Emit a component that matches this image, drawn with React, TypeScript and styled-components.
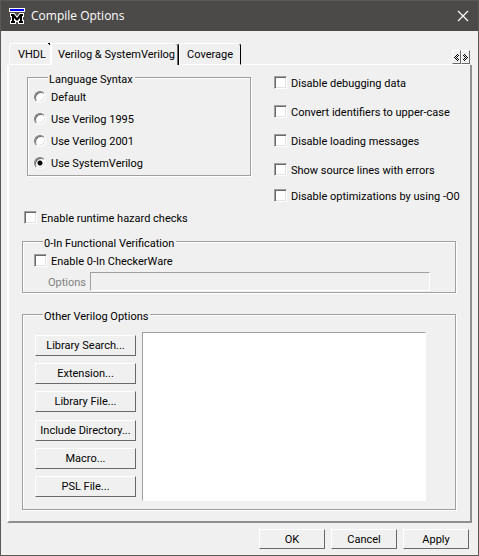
import React, { useState } from "react";
import styled, { createGlobalStyle, css } from "styled-components";

const face = "#f0f0f0";
const shade = "#a0a0a0";
const dark = "#696969";

const GlobalStyle = createGlobalStyle`
  * { box-sizing: border-box; }
  body { margin: 0; background: ${face}; }
  body, button, input, textarea, legend {
    font-family: Roboto, "Liberation Sans", sans-serif;
    font-size: 11px;
    line-height: 14px;
    color: #000;
  }
`;

const Dialog = styled.main`
  display: flex;
  flex-direction: column;
  min-height: 100vh;
  background: ${face};
  border: 1px solid #5a5958;
`;

const TitleBar = styled.header`
  display: flex;
  align-items: center;
  height: 30px;
  padding: 0 9px 0 8px;
  background: #4c4a48;
`;

const Title = styled.h1`
  flex: 1;
  margin: 0 0 0 5px;
  font: 400 12px/18px "Open Sans", "Noto Sans", sans-serif;
  color: #fff;
`;

const CloseButton = styled.button`
  display: flex;
  padding: 0;
  border: 0;
  background: none;
`;

const TabBar = styled.div`
  display: flex;
  align-items: flex-end;
  margin: 12px 8px 0;
`;

const coveredTab = css`
  padding: 2px 4px 0 8px;
  border-width: 1px 0 1px 1px;
  &::after {
    content: "";
    position: absolute;
    top: -1px;
    right: 0;
    width: 2px;
    height: 2px;
    background: linear-gradient(45deg, ${face} 40%, #000 40%);
  }
`;

const activeTab = css`
  padding: 1px 3px 0 6px;
  border-width: 1px 1px 0 2px;
  border-right-color: #000;
  border-top-right-radius: 3px;
  box-shadow: inset -1px 0 0 ${dark};
`;

const plainTab = css`
  padding: 2px 7px 0 7px;
  border-width: 1px 1px 1px 1px;
  border-right-color: #000;
  border-top-right-radius: 3px;
`;

const Tab = styled.button<{ $look: "covered" | "active" | "plain" }>`
  position: relative;
  height: 22px;
  white-space: nowrap;
  background: ${face};
  border: 0 solid #fff;
  border-top-left-radius: 3px;
  ${(p) => ({ covered: coveredTab, active: activeTab, plain: plainTab })[p.$look]}
`;

const TabFill = styled.div`
  flex: 1;
  align-self: stretch;
  display: flex;
  justify-content: flex-end;
  align-items: flex-end;
  border-bottom: 1px solid #fff;
`;

const ScrollButton = styled.button`
  display: flex;
  align-items: center;
  justify-content: center;
  width: 9px;
  height: 14px;
  padding: 0;
  background: ${face};
  border: 1px solid;
  border-color: #fff ${dark} ${dark} #fff;
`;

const Panel = styled.section`
  display: flex;
  flex-direction: column;
  flex: 1;
  margin: 0 6px;
  padding-top: 4px;
  padding-bottom: 11px;
  border: 2px solid;
  border-color: transparent #8f8f8f #8f8f8f #fff;
  border-top-width: 0;
`;

const TopOptions = styled.div`
  display: grid;
  grid-template-columns: 8fr 7fr;
  align-items: start;
  column-gap: 23px;
  padding-left: 18px;
`;

const Group = styled.fieldset`
  min-width: 0;
  margin: 0;
  padding: 0 0 1px;
  border: 1px solid ${shade};
  box-shadow: 1px 1px 0 #fff, inset 1px 1px 0 #fff;
`;

const WideGroup = styled(Group)`
  margin: 4px 14px 0 13px;
`;

const ListGroup = styled(WideGroup)`
  display: flex;
  flex-direction: column;
  flex: 1;
  margin-top: 13px;
`;

const Legend = styled.legend`
  margin-left: 20px;
  padding: 4px 2px 0 1px;
  line-height: 13px;
  background: ${face};
`;

const Choice = styled.label<{ $indent?: number }>`
  display: flex;
  align-items: center;
  gap: 4px;
  height: 22px;
  padding-top: 2px;
  padding-left: ${(p) => p.$indent ?? 0}px;
  white-space: nowrap;
`;

const Check = styled.input.attrs({ type: "checkbox" })`
  appearance: none;
  width: 13px;
  height: 13px;
  margin: 0 0 3px;
  background: #fff;
  border: 1px solid;
  border-color: ${shade} #fff #fff ${shade};
  box-shadow: inset 1px 1px 0 ${dark}, inset -1px -1px 0 #e3e3e3;
  &:checked {
    background: linear-gradient(#000, #000) center / 5px 5px no-repeat #fff;
  }
`;

const Radio = styled.input.attrs({ type: "radio" })`
  appearance: none;
  width: 12px;
  height: 12px;
  margin: 0 1px 2px 0;
  border-radius: 6px;
  background: #fff;
  border: 1px solid;
  border-color: #808080 #fff #fff #808080;
  box-shadow: inset 1px 1px 0 ${dark}, inset -1px -1px 0 #e3e3e3;
  &:checked {
    background: radial-gradient(circle, #000 2px, #fff 3px);
  }
`;

const Checks = styled.div<{ $gap: number }>`
  display: flex;
  flex-direction: column;
  gap: ${(p) => p.$gap}px;
`;

const CheckColumn = styled(Checks)`
  padding-top: 3px;
`;

const Field = styled.div`
  display: grid;
  grid-template-columns: 42px 1fr;
  align-items: center;
  padding: 0 25px;
  color: #808080;
`;

const FieldLabel = styled.label`
  padding-top: 2px;
`;

const TextBox = styled.input`
  width: 100%;
  min-width: 0;
  height: 19px;
  padding: 0 3px;
  background: ${face};
  border: 1px solid;
  border-color: ${shade} #fff #fff ${shade};
  border-radius: 0;
`;

const Lists = styled.div`
  display: grid;
  grid-template-columns: 101px 1fr;
  column-gap: 6px;
  flex: 1;
  padding: 9px 29px 7px 12px;
`;

const ButtonColumn = styled.div`
  display: flex;
  flex-direction: column;
  justify-content: space-between;
  padding: 3px 0 4px;
`;

const PushButton = styled.button`
  height: 21px;
  padding: 1px 0 0;
  white-space: nowrap;
  background: ${face};
  border: 1px solid;
  border-color: #fff ${dark} ${dark} #fff;
`;

const ListBox = styled.textarea`
  display: block;
  width: 100%;
  min-height: 169px;
  padding: 3px;
  resize: none;
  background: #fff;
  border: 1px solid;
  border-color: ${shade} #fff #fff ${shade};
  border-radius: 0;
`;

const Footer = styled.footer`
  display: grid;
  grid-template-columns: repeat(3, 66px);
  justify-content: end;
  gap: 6px;
  padding: 6px 9px 6px;
`;

const FooterButton = styled(PushButton)`
  height: 20px;
`;

const AppIcon = () => (
  <svg width="17" height="17" viewBox="0 0 17 17" aria-hidden="true">
    <path d="M0 0h16v4H0z" fill="#fff" />
    <path d="M1 1h14v2H1z" fill="#0000f0" />
    <path
      d="M2 6h3l3 4 3-4h3v2h-1v5h1v2h-4v-2h1v-3l-3 3-3-3v3h1v2H2v-2h1V8H2z"
      fill="#000"
      stroke="#fff"
      strokeWidth="2"
      paintOrder="stroke"
    />
  </svg>
);

const CloseIcon = () => (
  <svg width="12" height="12" viewBox="0 0 12 12" aria-hidden="true">
    <path d="M1 1l10 10M11 1L1 11" stroke="#fff" strokeWidth="1.2" />
  </svg>
);

const Chevrons = ({ right }: { right?: boolean }) => (
  <svg width="5" height="7" viewBox="0 0 5 7" shapeRendering="crispEdges" aria-hidden="true">
    <path
      transform={right ? "translate(5 0) scale(-1 1)" : undefined}
      d="M0 3h1v1H0zM1 2h1v1H1zM1 4h1v1H1zM2 1h1v1H2zM2 3h1v1H2zM2 5h1v1H2zM3 0h1v1H3zM3 2h1v1H3zM3 4h1v1H3zM3 6h1v1H3zM4 1h1v1H4zM4 5h1v1H4z"
      fill="#000"
    />
  </svg>
);

const syntaxes = ["Default", "Use Verilog 1995", "Use Verilog 2001", "Use SystemVerilog"];
const mainChecks = [
  "Disable debugging data",
  "Convert identifiers to upper-case",
  "Disable loading messages",
  "Show source lines with errors",
];
const listButtons = [
  "Library Search...",
  "Extension...",
  "Library File...",
  "Include Directory...",
  "Macro...",
  "PSL File...",
];

export default function App() {
  const [syntax, setSyntax] = useState("Use SystemVerilog");
  const [checker, setChecker] = useState(false);

  return (
    <>
      <GlobalStyle />
      <Dialog>
        <TitleBar>
          <AppIcon />
          <Title>Compile Options</Title>
          <CloseButton aria-label="Close"><CloseIcon /></CloseButton>
        </TitleBar>

        <TabBar role="tablist">
          <Tab role="tab" $look="covered">VHDL</Tab>
          <Tab role="tab" aria-selected $look="active">Verilog &amp; SystemVerilog</Tab>
          <Tab role="tab" $look="plain">Coverage</Tab>
          <TabFill>
            <ScrollButton aria-label="Scroll tabs left"><Chevrons /></ScrollButton>
            <ScrollButton aria-label="Scroll tabs right"><Chevrons right /></ScrollButton>
          </TabFill>
        </TabBar>

        <Panel>
          <TopOptions>
            <Group>
              <Legend>Language Syntax</Legend>
              {syntaxes.map((name) => (
                <Choice key={name} $indent={6}>
                  <Radio name="syntax" checked={syntax === name} onChange={() => setSyntax(name)} />
                  {name}
                </Choice>
              ))}
            </Group>
            <CheckColumn $gap={4}>
              <Checks $gap={7}>
                {mainChecks.map((name) => (
                  <Choice key={name}><Check />{name}</Choice>
                ))}
              </Checks>
              <Choice><Check />Disable optimizations by using -O0</Choice>
            </CheckColumn>
          </TopOptions>

          <Choice $indent={15}><Check />Enable runtime hazard checks</Choice>

          <WideGroup>
            <Legend>0-In Functional Verification</Legend>
            <Choice $indent={11}>
              <Check checked={checker} onChange={() => setChecker(!checker)} />
              Enable 0-In CheckerWare
            </Choice>
            <Field>
              <FieldLabel htmlFor="checker-options">Options</FieldLabel>
              <TextBox id="checker-options" disabled={!checker} />
            </Field>
          </WideGroup>

          <ListGroup>
            <Legend>Other Verilog Options</Legend>
            <Lists>
              <ButtonColumn>
                {listButtons.map((name) => <PushButton key={name}>{name}</PushButton>)}
              </ButtonColumn>
              <ListBox aria-label="Other Verilog Options" />
            </Lists>
          </ListGroup>
        </Panel>

        <Footer>
          <FooterButton>OK</FooterButton>
          <FooterButton>Cancel</FooterButton>
          <FooterButton>Apply</FooterButton>
        </Footer>
      </Dialog>
    </>
  );
}
